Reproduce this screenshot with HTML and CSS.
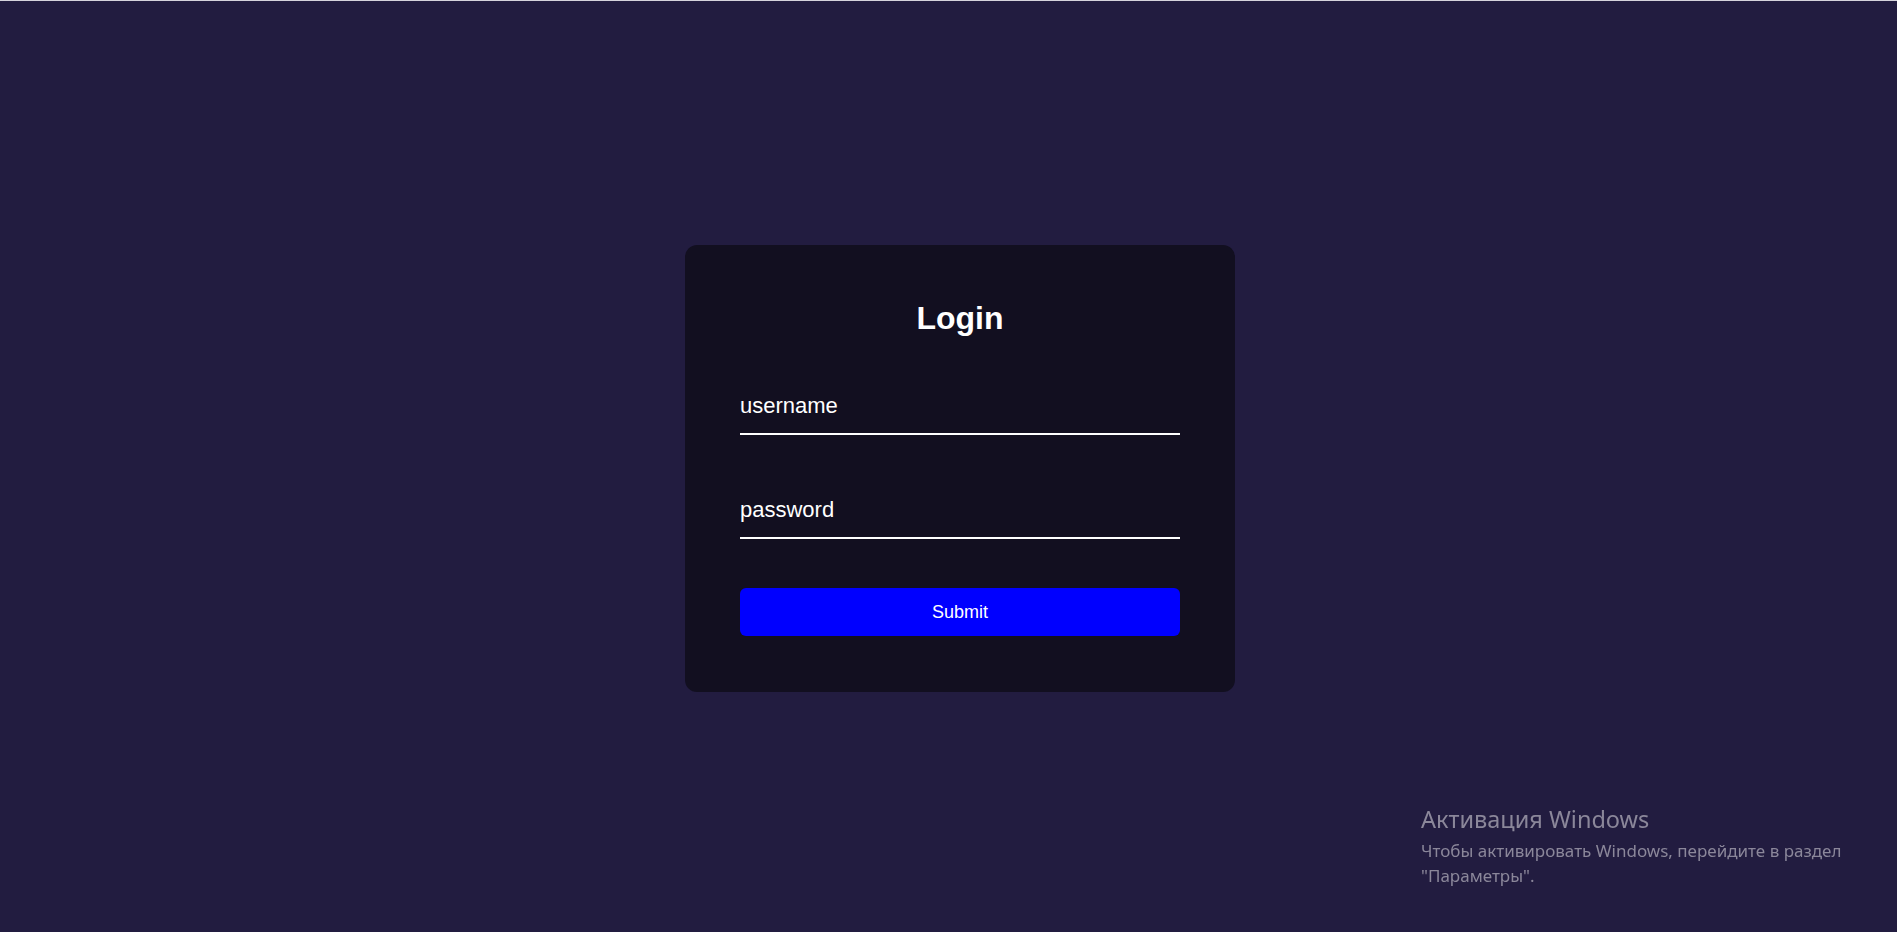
FILE: index.html
```html
<!DOCTYPE html>
<html lang="en">

<head>
  <meta charset="UTF-8" />
  <meta name="viewport" content="width=device-width, initial-scale=1.0">
  <title>Login</title>
  <link rel="stylesheet" href="styles.css">
</head>

<body>
  <div class="page">
    <div class="login-card">
      <h1>Login</h1>

      <form class="login-form" onsubmit="return false;">
        <input type="text" class="field" placeholder="username">
        <input type="password" class="field field-last" placeholder="password">
        <button type="submit" class="submit-btn">Submit</button>
      </form>
    </div>
  </div>

  <div class="activation">
    <div class="activation-title">Активация Windows</div>
    <div class="activation-text">Чтобы активировать Windows, перейдите в раздел<br>"Параметры".</div>
  </div>
</body>

</html>
```

FILE: styles.css
```css
* {
  box-sizing: border-box;
}

body {
  margin: 0;
  font-family: 'Liberation Sans', Arial, sans-serif;
  background: #221c40;
  overflow: hidden;
}

.page {
  min-height: 100vh;
  border-top: 1px solid #d6d4dc;
  padding: 4px 0 0 23px;
  display: flex;
  align-items: center;
  justify-content: center;
}

.login-card {
  width: 550px;
  background: #120f20;
  border-radius: 12px;
  padding: 55px 55px 56px;
}

h1 {
  margin: 0 0 38px;
  text-align: center;
  color: #fff;
  font-size: 32px;
  font-weight: bold;
}

.login-form {
  display: flex;
  flex-direction: column;
}

.field {
  width: 100%;
  background: transparent;
  border: none;
  border-bottom: 2px solid #fff;
  padding: 18px 0 14px;
  margin: 0 0 44px;
  color: #fff;
  font-family: inherit;
  font-size: 22px;
  outline: none;
}

.field::placeholder {
  color: #fff;
  opacity: 1;
}

.field-last {
  margin-bottom: 49px;
}

.submit-btn {
  height: 48px;
  border: none;
  border-radius: 6px;
  background: #0000ff;
  color: #fff;
  font-family: inherit;
  font-size: 18px;
  cursor: pointer;
}

/* windows watermark in the corner */
.activation {
  position: fixed;
  left: 1421px;
  top: 803px;
  color: #8b879a;
  font-family: 'Noto Sans', 'Open Sans', sans-serif;
}

.activation-title {
  font-size: 23.5px;
  line-height: 32px;
}

.activation-text {
  margin-top: 3px;
  font-size: 17px;
  line-height: 25px;
}
```
